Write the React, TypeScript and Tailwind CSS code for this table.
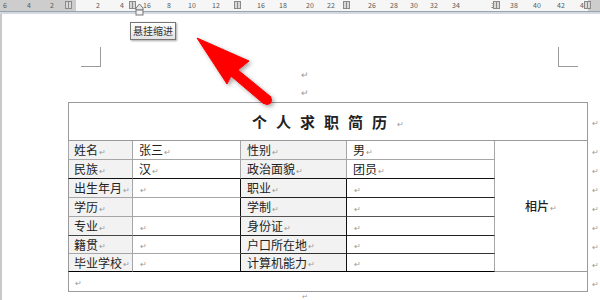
import React from 'react'

const font = { fontFamily: '"Noto Sans CJK SC", "Noto Sans", sans-serif' }

// ruler numbers and their x positions
const rulerNums: [string, number][] = [
  ['6', 3], ['4', 27], ['2', 50], ['2', 96], ['4', 120], ['16', 143],
  ['8', 167], ['10', 188], ['12', 212], ['16', 257], ['18', 279], ['20', 306],
  ['22', 327], ['26', 368], ['28', 390], ['30', 410], ['32', 430], ['34', 452],
  ['3', 491], ['38', 510], ['40', 533], ['42', 557], ['4', 580],
]

const markers = [68, 132, 237, 346, 496, 587]

const Mark = ({ className = '' }: { className?: string }) => (
  <span className={`ml-[1px] text-[8px] font-normal tracking-normal text-[#9a9a9a] align-middle ${className}`}>↵</span>
)

const Ruler = () => (
  <div className="relative h-[12px] bg-[#cdcdcd] border-b border-[#9aa4b0]">
    <div className="absolute left-[76px] top-0 h-[11px] w-[512px] bg-[#f6f6f6]" />
    {rulerNums.map(([n, x], i) => (
      <span
        key={i}
        className="absolute top-[0px] text-[7px] leading-[10px] text-[#5a5a5a]"
        style={{ left: x }}
      >
        {n}
      </span>
    ))}
    {markers.map((x) => (
      <div
        key={x}
        className="absolute top-[1px] h-[8px] w-[7px] border border-[#8a8a8a] bg-[#d8d8d8]"
        style={{ left: x - 3 }}
      >
        <div className="mx-auto h-full w-[1px] bg-[#8a8a8a]" />
      </div>
    ))}
  </div>
)

const lbl = 'bg-[#f2f2f2]'
const g = 'border-[#a6a6a6]'

export default function App() {
  return (
    <div className="relative h-[300px] w-[600px] overflow-hidden bg-white text-[#222]" style={font}>
      <Ruler />
      <div className="h-[2px] bg-[#d3d9e0]" />

      {/* page */}
      <div className="relative border-l-[2px] border-[#c8c8c8] pt-[52px]">
        {/* crop marks */}
        <div className="absolute left-[79px] top-[33px] h-[20px] w-[20px] border-b border-r border-[#9a9a9a]" />
        <div className="absolute left-[556px] top-[33px] h-[20px] w-[20px] border-b border-l border-[#9a9a9a]" />

        <div className="h-[18px] pl-[8px] text-center text-[9px] leading-[18px] text-[#9a9a9a]">↵</div>
        <div className="h-[18px] pl-[8px] text-center text-[9px] leading-[18px] text-[#9a9a9a]">↵</div>

        <table
          className="ml-[66px] table-fixed border-separate border-spacing-0 text-[12px] leading-none"
          style={{ width: 532 }}
        >
          <colgroup>
            <col style={{ width: 65 }} />
            <col style={{ width: 108 }} />
            <col style={{ width: 106 }} />
            <col style={{ width: 148 }} />
            <col style={{ width: 93 }} />
            <col style={{ width: 12 }} />
          </colgroup>
          <tbody>
            <tr className="h-[39px]">
              <td colSpan={5} className="border border-[#9a9a9a] text-center text-[15px] font-bold">
                <span className="tracking-[9px]">个人求职简历</span>
                <Mark className="-ml-[8px]" />
              </td>
              <td className="pl-[3px]"><Mark /></td>
            </tr>
            <tr className="h-[19px]">
              <td className={`${lbl} border-b border-l border-r ${g} pl-[5px]`}>姓名<Mark /></td>
              <td className={`border-b border-r ${g} pl-[6px]`}>张三<Mark /></td>
              <td className={`${lbl} border-b border-r ${g} pl-[6px]`}>性别<Mark /></td>
              <td className={`border-b border-r ${g} pl-[6px]`}>男<Mark /></td>
              <td rowSpan={7} className="border-b border-r border-[#9a9a9a] text-center font-medium">
                相片<Mark />
              </td>
              <td className="pl-[3px]"><Mark /></td>
            </tr>
            <tr className="h-[19px]">
              <td className={`${lbl} border-b border-l border-r border-l-[#9a9a9a] border-r-[#a6a6a6] border-b-[#111] pl-[5px]`}>民族<Mark /></td>
              <td className="border-b border-r border-r-[#a6a6a6] border-b-[#111] pl-[6px]">汉<Mark /></td>
              <td className={`${lbl} border-b border-r border-r-[#a6a6a6] border-b-[#111] pl-[6px]`}>政治面貌<Mark /></td>
              <td className="border-b border-r border-r-[#a6a6a6] border-b-[#111] pl-[6px]">团员<Mark /></td>
              <td className="pl-[3px]"><Mark /></td>
            </tr>
            {[
              ['出生年月', true, '职业', 'h-[19px]', 'border-b-[#a6a6a6]', 'border-b-[#222]'],
              ['学历', false, '学制', 'h-[19px]', 'border-b-[#a6a6a6]', 'border-b-[#555]'],
              ['专业', true, '身份证', 'h-[19px]', 'border-b-[#444]', 'border-b-[#222]'],
              ['籍贯', true, '户口所在地', 'h-[18px]', 'border-b-[#a6a6a6]', 'border-b-[#333]'],
              ['毕业学校', true, '计算机能力', 'h-[18px]', 'border-b-[#000]', 'border-b-[#000]'],
            ].map(([a, mk, c, h, leftB, rightB], i) => (
              <tr key={i} className={h as string}>
                <td className={`${lbl} border-b border-l border-r border-l-[#9a9a9a] border-r-[#a6a6a6] ${leftB} pl-[5px]`}>
                  {a}<Mark />
                </td>
                <td className={`border-b border-r border-r-[#111] ${leftB} pl-[6px]`}>{mk ? <Mark /> : null}</td>
                <td className={`${lbl} border-b border-r border-r-[#111] ${rightB} pl-[6px]`}>
                  {c}<Mark />
                </td>
                <td className={`border-b border-r border-r-[#a6a6a6] ${rightB} pl-[6px]`}><Mark /></td>
                <td className="pl-[3px]"><Mark /></td>
              </tr>
            ))}
            <tr className="h-[20px]">
              <td colSpan={5} className="border-b border-l border-r border-[#9a9a9a] pl-[5px]"><Mark /></td>
              <td className="pl-[3px]"><Mark /></td>
            </tr>
          </tbody>
        </table>
        <div className="h-[8px] pl-[8px] text-center text-[7px] leading-[8px] text-[#9a9a9a]">↵</div>
      </div>

      {/* hanging indent marker under the ruler */}
      <svg className="absolute left-[135px] top-[3px]" width="9" height="13" viewBox="0 0 9 13">
        <path d="M1 5 L4.5 1 L8 5 L8 7 L1 7 Z" fill="#e8e8e8" stroke="#777" strokeWidth="1" />
        <rect x="1" y="7" width="7" height="5" fill="#f4f4f4" stroke="#777" strokeWidth="1" />
      </svg>

      {/* tooltip */}
      <div className="absolute left-[130px] top-[22px] border border-[#767676] bg-gradient-to-b from-white to-[#e4e4e4] px-[2px] text-[10px] leading-[16px] text-[#333] shadow-[1px_1px_2px_rgba(0,0,0,0.35)]">
        悬挂缩进
      </div>

      {/* red arrow */}
      <svg className="pointer-events-none absolute left-0 top-0" width="600" height="300">
        <defs>
          <filter id="sh" x="-20%" y="-20%" width="140%" height="140%">
            <feDropShadow dx="2" dy="2" stdDeviation="2" floodColor="#000" floodOpacity="0.35" />
          </filter>
        </defs>
        <g filter="url(#sh)" fill="#ff0000">
          <path d="M197 38 L249 61 L238 70 L271 97 L264 104 L231 76 L227 84 Z" strokeLinejoin="round" stroke="#ff0000" strokeWidth="1" />
          <circle cx="267" cy="100" r="5" />
        </g>
      </svg>
    </div>
  )
}
